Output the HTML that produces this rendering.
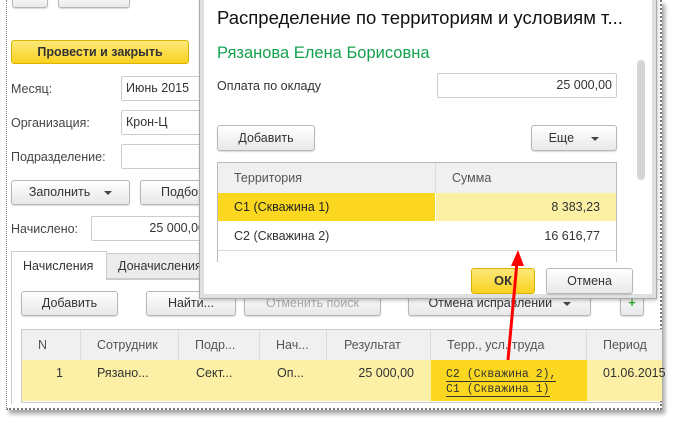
<!DOCTYPE html>
<html><head><meta charset="utf-8"><style>
*{box-sizing:border-box;margin:0;padding:0}
body{width:674px;height:426px;background:#fff;position:relative;overflow:hidden;font-family:"Liberation Sans",Arial,sans-serif;font-size:12px;color:#333}
.a{position:absolute}
.btn{position:absolute;border:1px solid #b8b8b8;border-radius:3px;background:linear-gradient(#fff,#e8e8e8);text-align:center;color:#333;font-size:12.5px;box-shadow:0 1px 1px rgba(0,0,0,.15)}
.inp{position:absolute;border:1px solid #ccc;border-radius:2px;background:#fff;font-size:12.5px;color:#333;padding:0 4px}
.lbl{position:absolute;font-size:12.5px;color:#444}
.tri{display:inline-block;width:0;height:0;border-left:4px solid transparent;border-right:4px solid transparent;border-top:4px solid #444;vertical-align:middle}
.th{position:absolute;background:#f0f0f0;border-right:1px solid #ddd;color:#555;font-size:12.5px}
</style></head><body>
<div class="a" style="left:6px;top:0;width:656px;height:410px;background:#fff;border-left:1px dotted #888;border-right:2px dotted #777;border-bottom:2px dotted #777;box-shadow:3px 4px 4px rgba(0,0,0,.35)"></div>
<div class="btn" style="left:12px;top:-6px;width:36px;height:14px"></div>
<div class="btn" style="left:58px;top:-6px;width:72px;height:14px"></div>
<div class="a" style="left:11px;top:40px;width:178px;height:24px;border:1px solid #d9b400;border-radius:3px;background:linear-gradient(#fde97a,#f9d11f);font-weight:bold;font-size:12.5px;text-align:center;line-height:22px;color:#333">Провести и закрыть</div>
<div class="lbl" style="left:11px;top:82px">Месяц:</div>
<div class="inp" style="left:121px;top:76px;width:90px;height:25px;line-height:23px">Июнь 2015</div>
<div class="lbl" style="left:11px;top:116px">Организация:</div>
<div class="inp" style="left:121px;top:110px;width:90px;height:25px;line-height:23px">Крон-Ц</div>
<div class="lbl" style="left:11px;top:150px">Подразделение:</div>
<div class="inp" style="left:121px;top:144px;width:90px;height:25px"></div>
<div class="btn" style="left:11px;top:180px;width:119px;height:25px;line-height:23px">Заполнить &nbsp;&nbsp;&nbsp;<span class="tri"></span></div>
<div class="btn" style="left:140px;top:180px;width:80px;height:25px;line-height:23px;text-align:left;padding-left:20px">Подбор</div>
<div class="lbl" style="left:11px;top:222px">Начислено:</div>
<div class="inp" style="left:91px;top:216px;width:120px;height:25px;line-height:23px;text-align:right;padding-right:5px">25 000,00</div>
<div class="a" style="left:11px;top:279px;width:651px;height:125px;border:1px solid #ccc;border-right:none;border-bottom:none"></div>
<div class="a" style="left:11px;top:251px;width:96px;height:29px;background:#fff;border:1px solid #ccc;border-bottom:none;line-height:28px;padding-left:11px;font-size:12.5px;color:#333">Начисления</div>
<div class="a" style="left:106px;top:253px;width:100px;height:26px;background:#ececec;border:1px solid #ccc;line-height:25px;padding-left:11px;font-size:12.5px;color:#333">Доначисления</div>
<div class="btn" style="left:21px;top:291px;width:97px;height:25px;line-height:23px">Добавить</div>
<div class="btn" style="left:146px;top:291px;width:90px;height:25px;line-height:23px">Найти...</div>
<div class="btn" style="left:244px;top:291px;width:137px;height:25px;line-height:23px;color:#aaa">Отменить поиск</div>
<div class="btn" style="left:408px;top:291px;width:183px;height:25px;line-height:23px">Отмена исправлений &nbsp;&nbsp;<span class="tri"></span></div>
<div class="btn" style="left:620px;top:291px;width:24px;height:25px;line-height:22px;color:#3a3;font-weight:bold">+</div>
<div class="a" style="left:21px;top:329px;width:641px;height:74px;border:1px solid #ccc;border-right:none"></div>
<div class="th" style="left:22px;top:330px;width:59px;height:30px;line-height:30px;padding-left:16px">N</div>
<div class="th" style="left:81px;top:330px;width:98px;height:30px;line-height:30px;padding-left:16px">Сотрудник</div>
<div class="th" style="left:179px;top:330px;width:81px;height:30px;line-height:30px;padding-left:16px">Подр...</div>
<div class="th" style="left:260px;top:330px;width:67px;height:30px;line-height:30px;padding-left:16px">Нач...</div>
<div class="th" style="left:327px;top:330px;width:104px;height:30px;line-height:30px;padding-left:17px">Результат</div>
<div class="th" style="left:431px;top:330px;width:156px;height:30px;line-height:30px;padding-left:16px">Терр., усл. труда</div>
<div class="th" style="left:587px;top:330px;width:75px;height:30px;line-height:30px;padding-left:16px;border:none">Период</div>
<div class="a" style="left:22px;top:360px;width:640px;height:41px;background:#fbf0a5"></div>
<div class="a" style="left:431px;top:360px;width:156px;height:41px;background:#fbd81f"></div>
<div class="a" style="left:22px;top:366px;width:59px;text-align:right;padding-right:18px;font-size:12.5px">1</div>
<div class="a" style="left:97px;top:366px;font-size:12.5px">Рязано...</div>
<div class="a" style="left:196px;top:366px;font-size:12.5px">Сект...</div>
<div class="a" style="left:277px;top:366px;font-size:12.5px">Оп...</div>
<div class="a" style="left:327px;top:366px;width:87px;text-align:right;font-size:12.5px">25 000,00</div>
<div class="a" style="left:446px;top:367px;font-family:'Liberation Mono',monospace;font-size:11.5px;line-height:15px;color:#333"><span style="border-bottom:1px solid #333">С2 (Скважина 2),</span><br><span style="border-bottom:1px solid #333">С1 (Скважина 1)</span></div>
<div class="a" style="left:603px;top:366px;font-size:12.5px;white-space:nowrap">01.06.2015</div>
<div class="a" style="left:200px;top:-4px;width:456px;height:302px;background:#fff;border:4px solid #e0e0e0;border-top:none;outline:1px solid #aaa;box-shadow:1px 2px 4px rgba(0,0,0,.3)"></div>
<div class="a" style="left:217px;top:7px;font-size:18.5px;color:#111;white-space:nowrap">Распределение по территориям и условиям т...</div>
<div class="a" style="left:217px;top:44px;font-size:16.5px;color:#14a14e">Рязанова Елена Борисовна</div>
<div class="lbl" style="left:217px;top:79px;color:#333">Оплата по окладу</div>
<div class="inp" style="left:437px;top:73px;width:180px;height:25px;line-height:23px;text-align:right;padding-right:4px">25 000,00</div>
<div class="btn" style="left:217px;top:125px;width:98px;height:26px;line-height:24px">Добавить</div>
<div class="btn" style="left:531px;top:125px;width:86px;height:26px;line-height:24px">Еще &nbsp;&nbsp;&nbsp;&nbsp;<span class="tri"></span></div>
<div class="a" style="left:217px;top:162px;width:400px;height:100px;border:1px solid #bbb;border-bottom:none"></div>
<div class="th" style="left:218px;top:163px;width:218px;height:30px;line-height:30px;padding-left:16px">Территория</div>
<div class="th" style="left:436px;top:163px;width:180px;height:30px;line-height:30px;padding-left:16px;border:none">Сумма</div>
<div class="a" style="left:218px;top:193px;width:217px;height:28px;background:#fbd81f;line-height:28px;padding-left:16px;font-size:12.5px;color:#222">С1 (Скважина 1)</div>
<div class="a" style="left:436px;top:193px;width:180px;height:28px;background:#fcf0a5;line-height:28px;text-align:right;padding-right:16px;font-size:12.5px">8 383,23</div>
<div class="a" style="left:218px;top:222px;width:398px;height:29px;line-height:29px;padding-left:16px;font-size:12.5px;border-bottom:1px solid #ddd">С2 (Скважина 2)</div>
<div class="a" style="left:436px;top:222px;width:180px;height:29px;line-height:29px;text-align:right;padding-right:16px;font-size:12.5px">16 616,77</div>
<div class="a" style="left:637px;top:60px;width:8px;height:120px;background:#d4d4d4;border-radius:4px"></div>
<div class="a" style="left:471px;top:268px;width:64px;height:26px;border:1px solid #d9b400;border-radius:3px;background:linear-gradient(#fde97a,#f9d11f);text-align:center;line-height:24px;font-weight:bold;font-size:13px;color:#333">ОК</div>
<div class="btn" style="left:546px;top:268px;width:87px;height:26px;line-height:24px">Отмена</div>
<svg class="a" style="left:0;top:0" width="674" height="426"><line x1="508" y1="360" x2="517" y2="262" stroke="#f00" stroke-width="3"/><polygon points="518,250 511,266 524,266" fill="#f00"/></svg>
</body></html>
